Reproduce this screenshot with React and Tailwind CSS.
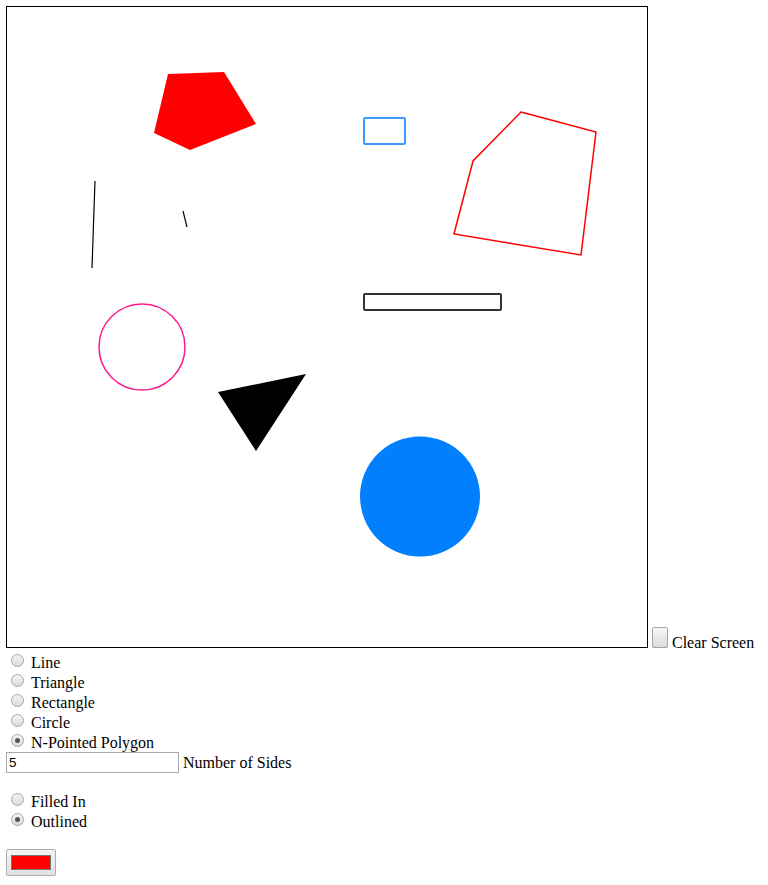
import React from 'react';

// drawing board: shapes already on the canvas
function Board() {
  return (
    <div className="w-[642px] h-[642px] border border-black bg-white shrink-0 mb-[4px]">
      <svg width="640" height="640" viewBox="0 0 640 640">
        <polygon points="161,67 217,65 249,117 183,143 147,126" fill="#ff0000" />
        <line x1="88" y1="174" x2="85" y2="261" stroke="#000" strokeWidth="1.2" />
        <line x1="176" y1="204" x2="180" y2="220" stroke="#000" strokeWidth="1.2" />
        <rect x="357" y="111" width="41" height="26" rx="1" fill="none" stroke="#3d9bff" strokeWidth="2" />
        <polygon points="514,105 589,125 574,248 447,227 466,154" fill="none" stroke="#ff0000" strokeWidth="1.5" />
        <rect x="357" y="287" width="137" height="16" rx="1" fill="none" stroke="#333" strokeWidth="2" />
        <circle cx="135" cy="340" r="43" fill="none" stroke="#ff1a8c" strokeWidth="1.5" />
        <polygon points="211,385 299,367 249,444" fill="#000" />
        <circle cx="413" cy="489.5" r="60" fill="#0080ff" />
      </svg>
    </div>
  );
}

function Radio({ label, checked }) {
  return (
    <div className="flex items-start h-[20px] leading-[22px]">
      <span className="mt-[2px] ml-[5px] mr-[7px] w-[13px] h-[13px] rounded-full border border-[#a6a6a6] bg-linear-to-b from-[#f4f4f4] to-[#dcdcdc] flex items-center justify-center">
        {checked && <span className="w-[5px] h-[5px] rounded-full bg-[#555]" />}
      </span>
      <span>{label}</span>
    </div>
  );
}

export default function App() {
  const shapes = ['Line', 'Triangle', 'Rectangle', 'Circle', 'N-Pointed Polygon'];

  return (
    <div className="pt-[6px] pl-[6px] font-['Liberation_Serif',serif] text-[16px] text-black bg-white min-h-[885px]">
      <div className="flex items-end">
        <Board />
        <button className="ml-[4px] mb-[4px] w-[16px] h-[21px] border border-[#a3a3a3] rounded-[2px] bg-linear-to-b from-[#f6f6f6] to-[#dddddd]" />
        <span className="ml-[4px] leading-[20px] mb-[-1px]">Clear Screen</span>
      </div>

      <div className="flex flex-col">
        {shapes.map((s) => (
          <Radio key={s} label={s} checked={s === 'N-Pointed Polygon'} />
        ))}
      </div>

      <div className="flex items-center h-[21px]">
        <div className="w-[173px] h-[21px] border border-[#a9a9a9] px-[2px] flex items-center font-['Liberation_Sans',sans-serif] text-[13.33px]">
          5
        </div>
        <span className="ml-[4px] mt-[1px]">Number of Sides</span>
      </div>

      <div className="flex flex-col mt-[18px]">
        <Radio label="Filled In" />
        <Radio label="Outlined" checked />
      </div>

      <button className="mt-[18px] w-[50px] h-[27px] border border-[#adadad] rounded-[2px] bg-linear-to-b from-[#f3f3f3] to-[#e1e1e1] flex items-center justify-center">
        <span className="w-[40px] h-[15px] bg-[#ff0000] border border-[#777]" />
      </button>
    </div>
  );
}
